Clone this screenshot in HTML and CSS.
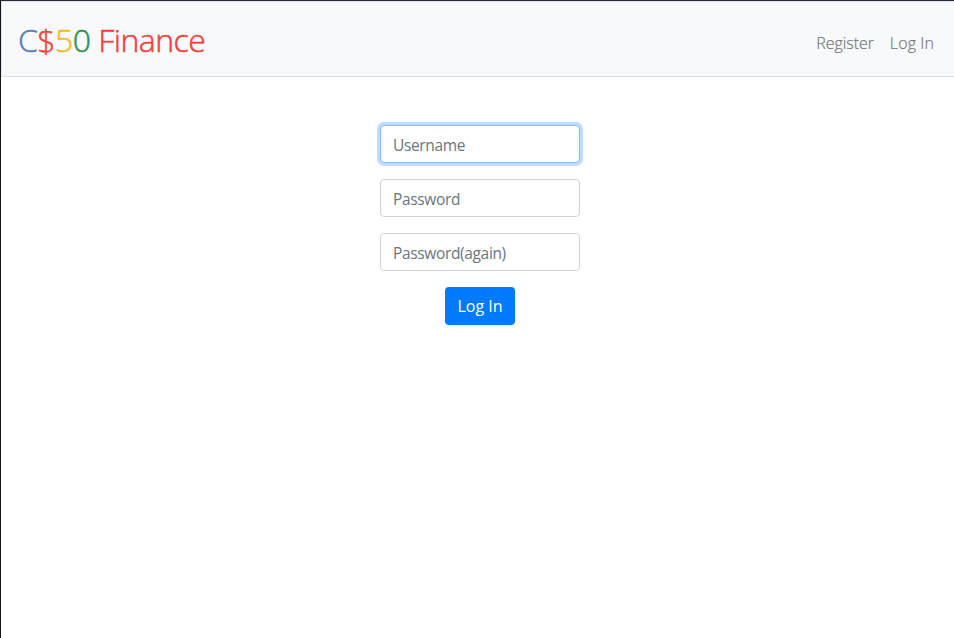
FILE: index.html
```html
<!DOCTYPE html>
<html lang="en">
<head>
<meta charset="utf-8">
<title>C$50 Finance: Register</title>
<link rel="stylesheet" href="styles.css">
</head>
<body>
<nav class="navbar">
  <a class="brand" href="#"><span class="blue">C</span><span class="red">$</span><span class="yellow">5</span><span class="green">0</span> <span class="red">Finance</span></a>
  <div class="links"><a class="register" href="#">Register</a><a class="login" href="#">Log In</a></div>
</nav>
<main>
  <form>
    <input class="field focused" type="text" placeholder="Username">
    <input class="field" type="password" placeholder="Password">
    <input class="field" type="password" placeholder="Password(again)">
    <button class="submit" type="button"><span>Log In</span></button>
  </form>
</main>
</body>
</html>
```
FILE: styles.css
```css
* { box-sizing: border-box; }
body {
  margin: 0;
  min-height: 638px;
  border-top: 1px solid #2b2938;
  border-left: 1px solid #17151c;
  background: #fff;
  font: 400 16px/24px "Open Sans", "Noto Sans", sans-serif;
}
a { text-decoration: none; }
.navbar {
  display: flex;
  align-items: center;
  justify-content: space-between;
  height: 76px;
  padding: 0 20px 0 16px;
  border: 1px solid #dee2e6;
  border-width: 1px 0 1px 1px;
  border-top-color: #e4e4ee;
  border-left-color: #e4e4ee;
  background: #f8f9fb;
}
.brand {
  padding-top: 2px;
  font-size: 32px;
  line-height: 48px;
  font-weight: 300;
  letter-spacing: -0.55px;
  -webkit-text-stroke: 0.5px;
  white-space: nowrap;
}
.blue { color: #537fbe; }
.red { color: #ea433b; }
.yellow { color: #f5b82e; }
.green { color: #2e944b; }
.links { display: flex; gap: 16px; padding-top: 7px; font-weight: 300; }
.links a { color: #777; white-space: nowrap; -webkit-text-stroke: 0.2px; }
.login { letter-spacing: 0.1px; }
.register { letter-spacing: -0.05px; }
main { padding-top: 48px; padding-left: 5px; }
form { display: flex; flex-direction: column; align-items: center; gap: 16px; }
.field {
  width: 200px;
  height: 38px;
  padding: 8px 12px 6px;
  border: 1px solid #ced4da;
  border-radius: 4px;
  background: #fff;
  font: inherit;
  font-size: 15.5px;
  letter-spacing: -0.35px;
  outline: 0;
}
.field::placeholder { color: #6c757d; opacity: 1; }
.focused { border-color: #80bdff; box-shadow: 0 0 0 3px #bfdeff; }
.submit {
  width: 70px;
  height: 38px;
  padding: 0;
  border: 0;
  border-radius: 4px;
  background: #007bff;
  color: #fff;
  font: inherit;
  white-space: nowrap;
}
```
